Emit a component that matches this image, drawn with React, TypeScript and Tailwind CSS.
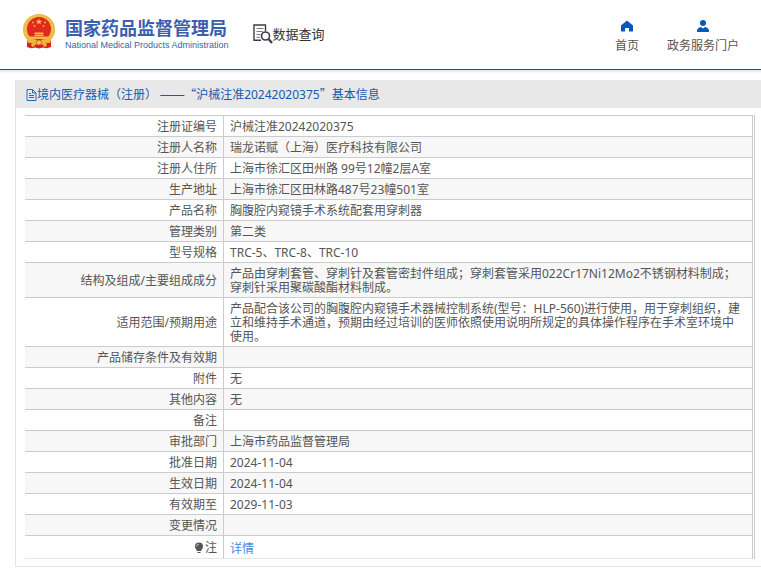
import type { ReactNode } from "react";
import clsx from "clsx";

const ROWS: { label: string; value: string }[] = [
  { label: "注册证编号", value: "沪械注准20242020375" },
  { label: "注册人名称", value: "瑞龙诺赋（上海）医疗科技有限公司" },
  { label: "注册人住所", value: "上海市徐汇区田州路 99号12幢2层A室" },
  { label: "生产地址", value: "上海市徐汇区田林路487号23幢501室" },
  { label: "产品名称", value: "胸腹腔内窥镜手术系统配套用穿刺器" },
  { label: "管理类别", value: "第二类" },
  { label: "型号规格", value: "TRC-5、TRC-8、TRC-10" },
  {
    label: "结构及组成/主要组成成分",
    value: "产品由穿刺套管、穿刺针及套管密封件组成；穿刺套管采用022Cr17Ni12Mo2不锈钢材料制成；穿刺针采用聚碳酸酯材料制成。",
  },
  {
    label: "适用范围/预期用途",
    value: "产品配合该公司的胸腹腔内窥镜手术器械控制系统(型号：HLP-560)进行使用，用于穿刺组织，建立和维持手术通道，预期由经过培训的医师依照使用说明所规定的具体操作程序在手术室环境中使用。",
  },
  { label: "产品储存条件及有效期", value: "" },
  { label: "附件", value: "无" },
  { label: "其他内容", value: "无" },
  { label: "备注", value: "" },
  { label: "审批部门", value: "上海市药品监督管理局" },
  { label: "批准日期", value: "2024-11-04" },
  { label: "生效日期", value: "2024-11-04" },
  { label: "有效期至", value: "2029-11-03" },
  { label: "变更情况", value: "" },
];

function Emblem() {
  return (
    <svg viewBox="0 0 32 35" className="h-[35px] w-8 shrink-0" aria-hidden="true">
      <path d="M4 24 L4 33 Q8 35 12 33.500 L16 34.500 L20 33.500 Q24 35 28 33 L28 24Z" fill="#d8231c" />
      <ellipse cx="16" cy="15.500" rx="16" ry="15.500" fill="#efb541" />
      <circle cx="16" cy="15.500" r="13.800" fill="none" stroke="#f8d477" strokeWidth="1" strokeDasharray="2 1.5" />
      <circle cx="16" cy="15" r="12" fill="#df2a1d" />
      <path d="M16 4.500l.8 2.300h2.400l-1.900 1.400.7 2.300-2-1.400-2 1.400.7-2.300-1.900-1.400h2.400z" fill="#f9cf45" />
      <g fill="#f6bd3c">
        <circle cx="10" cy="8.500" r=".9" />
        <circle cx="22" cy="8.500" r=".9" />
        <circle cx="11.500" cy="12" r=".9" />
        <circle cx="20.500" cy="12" r=".9" />
        <path d="M12 18.500h8l1 1.500H11zM11.500 20.500h9V22h-9zM6 22.500h20l-1 2.500H7z" />
      </g>
      <path d="M4 26 Q11 23.500 16 27 Q21 23.500 28 26 L27 29 Q21 27.500 19 30 H13 Q11 27.500 5 29Z" fill="#f2b53a" />
      <circle cx="16" cy="28.500" r="2.600" fill="#f5c552" stroke="#d8231c" strokeWidth=".7" />
      <path d="M8 30 L11 29.500 L12 32 L9 33Z M24 30 L21 29.500 L20 32 L23 33Z" fill="#f2b53a" />
    </svg>
  );
}

function SearchDocIcon() {
  return (
    <svg viewBox="0 0 20 20" className="size-5 shrink-0" fill="none" stroke="#3d3d48" aria-hidden="true">
      <path d="M8 16.200H1V1h11.500v6" strokeWidth="1.400" />
      <path d="M3.500 4.500h7M3.500 7.500h6M3.500 10.500h4M3.500 13.200h3.500" strokeWidth="1.100" stroke="#777783" />
      <circle cx="12.500" cy="12" r="4" strokeWidth="1.600" />
      <path d="M15.500 15l3.500 4" strokeWidth="2.200" />
    </svg>
  );
}

function HomeIcon() {
  return (
    <svg viewBox="0 0 12 12" className="size-3" fill="#0558b8" aria-hidden="true">
      <path d="M6 .5 L12 5.500 V11.500 H8 V8 H4 V11.500 H0 V5.500Z" />
    </svg>
  );
}

function UserIcon() {
  return (
    <svg viewBox="0 0 12 12" className="size-3" fill="#0558b8" aria-hidden="true">
      <circle cx="6" cy="3" r="3" />
      <path d="M0 12 V10.500 Q.5 7.500 4 7 L6 8.500 L8 7 Q11.500 7.500 12 10.500 V12Z" />
    </svg>
  );
}

function FileIcon() {
  return (
    <svg viewBox="0 0 11 12" className="h-3 w-[11px] shrink-0" fill="none" stroke="#2767b8" aria-hidden="true">
      <path d="M1 .5h5.500L10 4v7.500H1zM6.500 .5V4H10M3 4.500h2M3 6.500h5M3 8.500h5" />
    </svg>
  );
}

function BulbIcon() {
  return (
    <svg viewBox="0 0 10 12" className="mr-px h-3 w-[10px]" aria-hidden="true">
      <path d="M5 .5a4 4 0 0 1 4 4c0 2-1.500 3-2 4.500H3C2.500 7.500 1 6.500 1 4.500a4 4 0 0 1 4-4z" fill="#555" />
      <path d="M2.700 4.500A2.300 2.300 0 0 1 5 2.200" fill="none" stroke="#ddd" strokeWidth=".8" />
      <path d="M3.500 10.500h3" stroke="#555" />
    </svg>
  );
}

function NavLink({ icon, children }: { icon: ReactNode; children: ReactNode }) {
  return (
    <a href="#" className="flex flex-col items-center gap-1">
      {icon}
      <span className="leading-5">{children}</span>
    </a>
  );
}

function Header() {
  return (
    <header>
      <div className="box-content flex h-[69px] items-start border-b border-[#156082] pr-[22px] pl-[23px]">
        <a href="#" className="mt-[14px] flex gap-[10px]">
          <Emblem />
          <span className="flex flex-col pt-1 text-[#3b5fae]">
            <span className="text-[18px] leading-5 font-bold whitespace-nowrap">国家药品监督管理局</span>
            <span className="font-['Liberation_Sans',sans-serif] text-[9px] leading-[14px] whitespace-nowrap">
              National Medical Products Administration
            </span>
          </span>
        </a>
        <a href="#" className="mt-6 ml-6 flex items-center text-[13px] leading-5 text-[#333]">
          <SearchDocIcon />
          数据查询
        </a>
        <nav className="mt-5 ml-auto flex gap-7">
          <NavLink icon={<HomeIcon />}>首页</NavLink>
          <NavLink icon={<UserIcon />}>政务服务门户</NavLink>
        </nav>
      </div>
      <div className="h-[3px] bg-linear-to-b from-[#d3e3ea] to-white" />
    </header>
  );
}

export default function App() {
  return (
    <div className="bg-white font-['Noto_Sans','Noto_Sans_CJK_SC',sans-serif] text-xs text-[#555]">
      <Header />
      <main className="mt-[7px] ml-[15px] border-b border-l border-[#e4e4e4] pb-[7px]">
        <h1 className="flex h-7 items-center bg-[#e8e8e8] pt-px pl-[10px] text-[#1659ae]">
          <FileIcon />
          <span>
            境内医疗器械（注册） <span className="font-['Liberation_Sans',sans-serif]">——</span>
            <span className="font-['Noto_Sans_CJK_SC',sans-serif]">“</span>
            沪械注准20242020375
            <span className="font-['Noto_Sans_CJK_SC',sans-serif]">”</span>基本信息
          </span>
        </h1>
        <div className="mt-[7px] mr-[6px] ml-[9px] border-r border-[#ccc] pr-px">
          <table className="w-full table-fixed border-separate border-spacing-0 border-t border-r border-[#ccc] leading-[14px]">
            <colgroup>
              <col className="w-[198px]" />
              <col />
            </colgroup>
            <tbody>
              {ROWS.map((row, i) => (
                <tr key={row.label} className={clsx("h-[21px]", i % 2 === 1 && "bg-[#f7f7f7]")}>
                  <th scope="row" className="border-b border-[#ccc] px-1.5 pt-1 pb-0.5 text-right font-normal">
                    {row.label}
                  </th>
                  <td className="border-b border-l border-[#ccc] pt-1 pr-2.5 pb-0.5 pl-1.5">{row.value}</td>
                </tr>
              ))}
              <tr className="h-[23px]">
                <th scope="row" className="border-b border-[#e6e6e6] px-1.5 pt-1 pb-0.5 font-normal">
                  <span className="flex items-center justify-end">
                    <BulbIcon />注
                  </span>
                </th>
                <td className="border-b border-l border-[#e6e6e6] border-l-[#ccc] pt-1.5 pr-2.5 pb-0.5 pl-1.5">
                  <a href="#" className="text-[#3c8ee5]">详情</a>
                </td>
              </tr>
            </tbody>
          </table>
        </div>
      </main>
    </div>
  );
}
